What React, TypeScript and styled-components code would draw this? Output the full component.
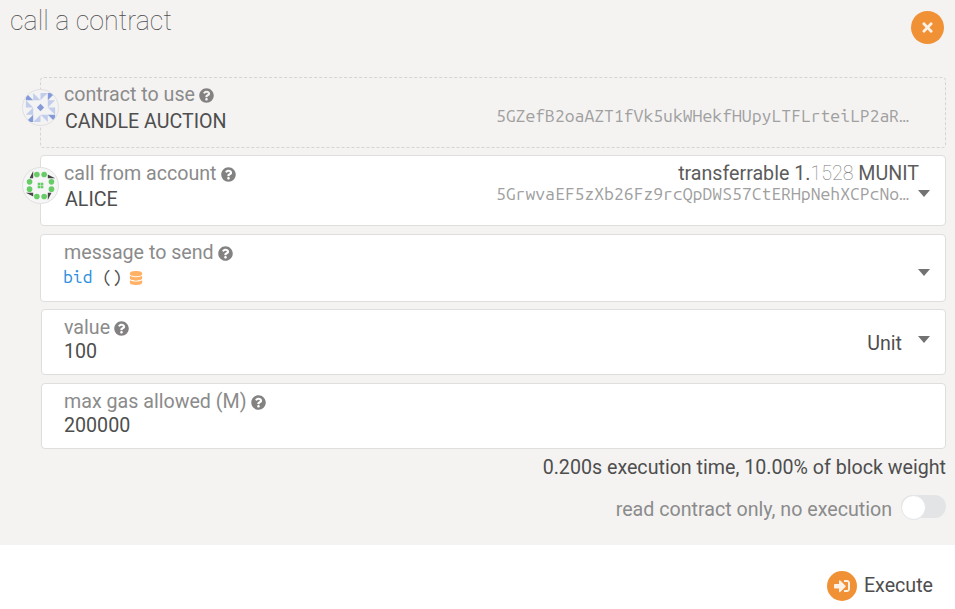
import React from 'react';
import styled, { createGlobalStyle, css } from 'styled-components';
import { FaQuestionCircle, FaTimes, FaDatabase, FaSignInAlt } from 'react-icons/fa';

const GlobalStyle = createGlobalStyle`
  * { box-sizing: border-box; }
  body {
    margin: 0;
    background: #fff;
    font-family: Roboto, sans-serif;
    font-size: 19.65px;
    color: #4e4e4e;
  }
`;

const Modal = styled.div`
  display: flex;
  flex-direction: column;
  width: 955px;
  height: 609px;
  overflow: hidden;
`;

const Content = styled.main`
  height: 545px;
  background: #f4f3f2;
`;

const Header = styled.header`
  display: flex;
  justify-content: space-between;
  align-items: flex-start;
  height: 77px;
  padding: 0 11px 0 10px;
`;

const Title = styled.h1`
  margin: 5px 0 0;
  font-size: 26.8px;
  font-weight: 100;
  line-height: 33px;
  color: #4e4e4e;
`;

const RoundIcon = styled.span<{ $size: number }>`
  display: flex;
  flex: none;
  align-items: center;
  justify-content: center;
  width: ${(p) => p.$size}px;
  height: ${(p) => p.$size}px;
  border-radius: 50%;
  background: #f19135;
  color: rgba(255, 255, 255, 0.87);
`;

const CloseButton = styled.button`
  margin: 11px 0 0;
  padding: 0;
  border: 0;
  background: none;
`;

const Fields = styled.div`
  display: flex;
  flex-direction: column;
  padding: 0 9px 0 40px;
`;

const Field = styled.section<{ $height: number; $gap: number; $dashed?: boolean; $inset?: boolean }>`
  position: relative;
  display: flex;
  justify-content: space-between;
  height: ${(p) => p.$height}px;
  margin-bottom: ${(p) => p.$gap}px;
  border: 1px solid #dededd;
  border-radius: 4px;
  background: #fff;
  padding-left: 23px;
  ${(p) => p.$dashed && css`
    border: 1px dashed #d5d4d3;
    background: transparent;
  `}
  ${(p) => p.$inset && css`
    margin-left: 1px;
    padding-left: 22px;
  `}
`;

const Identicon = styled.svg`
  position: absolute;
  left: -19px;
  top: 11px;
  width: 37px;
  height: 37px;
`;

const Main = styled.div<{ $top: number }>`
  display: flex;
  flex-direction: column;
  padding-top: ${(p) => p.$top}px;
`;

const Label = styled.label`
  display: flex;
  align-items: center;
  height: 24px;
  line-height: 24px;
  white-space: nowrap;
  color: #8b8b8b;

  svg {
    margin: 1px 0 0 4px;
    font-size: 15px;
    color: #838281;
  }
`;

const Value = styled.div<{ $offset?: number }>`
  height: 24px;
  margin-top: ${(p) => p.$offset ?? 0}px;
  line-height: 24px;
  white-space: nowrap;
`;

const AccountName = styled(Value)`
  padding-left: 1px;
  text-transform: uppercase;
`;

const Message = styled(Value)`
  display: flex;
  align-items: center;
  margin-left: -1px;
  font-family: 'Ubuntu Mono', 'DejaVu Sans Mono', monospace;
  font-size: 17.57px;
  white-space: pre;

  b {
    font-weight: 400;
    color: #2d8fdd;
  }

  svg {
    margin: 2px 0 0 7px;
    font-size: 14px;
    color: #ffb266;
  }
`;

const Side = styled.div<{ $top: number }>`
  display: flex;
  align-items: flex-start;
  padding: ${(p) => p.$top}px 15px 0 0;
`;

const Details = styled.div<{ $indent?: number }>`
  display: flex;
  flex-direction: column;
  align-items: flex-end;
  margin-right: ${(p) => p.$indent ?? 0}px;
`;

const Balance = styled.div`
  margin-right: -10px;
  height: 22px;
  line-height: 24px;
  color: #5c5c5c;

  span {
    font-weight: 100;
    color: #777;
  }
`;

const Address = styled.div`
  height: 20px;
  line-height: 20px;
  font-family: 'Ubuntu Mono', 'DejaVu Sans Mono', monospace;
  font-size: 17.57px;
  white-space: nowrap;
  color: #a0a0a0;
`;

const Caret = styled.span<{ $top: number; $gap?: number }>`
  width: 0;
  height: 0;
  margin: ${(p) => p.$top}px 0 0 ${(p) => p.$gap ?? 0}px;
  border: 6px solid transparent;
  border-top: 7px solid #727272;
  border-bottom: 0;
`;

const Estimate = styled.div`
  height: 36px;
  padding-top: 7px;
  line-height: 24px;
  text-align: right;
`;

const ToggleRow = styled.div`
  display: flex;
  justify-content: flex-end;
  height: 30px;
  line-height: 24px;
  padding-top: 13px;
  color: #8b8b8b;
`;

const Toggle = styled.span`
  width: 45.5px;
  height: 23px;
  margin: -3px 0 0 8.5px;
  border-radius: 12px;
  background: #e2e4e6;

  &::before {
    content: '';
    display: block;
    width: 23px;
    height: 23px;
    border: 1px solid #e2e4e6;
    border-radius: 50%;
    background: #fff;
  }
`;

const Footer = styled.footer`
  display: flex;
  justify-content: flex-end;
  align-items: flex-start;
  padding: 26px 22px 0 0;
`;

const ExecuteButton = styled.button`
  display: flex;
  align-items: flex-start;
  gap: 7px;
  padding: 0;
  border: 0;
  background: none;
  font: inherit;
  line-height: 30px;
  color: #4e4e4e;
`;

const Help = () => <FaQuestionCircle />;

const QUARTERS = [0, 90, 180, 270];

const ContractIdenticon = () => (
  <Identicon viewBox="-18.5 -18.5 37 37">
    <defs>
      <clipPath id="badge"><circle r="17.7" /></clipPath>
    </defs>
    <circle r="18" fill="#f3f3f3" stroke="#e0e0e0" />
    <g clipPath="url(#badge)">
      {QUARTERS.map((angle) => (
        <g key={angle} transform={`rotate(${angle})`}>
          <path d="M-14.6-14.6V-7.3H-7.3z" fill="#859bd9" />
          <path d="M-7.3-14.6V-7.3H0z" fill="#c2cdec" />
          <path d="M0-14.6H7.3L0-7.3z" fill="#c2cdec" />
        </g>
      ))}
    </g>
    <path d="M0-3.65L3.65 0 0 3.65-3.65 0z" fill="#859bd9" />
  </Identicon>
);

const AccountIdenticon = () => (
  <Identicon viewBox="-18.5 -18.5 37 37">
    <circle r="18" fill="#f6f6f6" stroke="#e0e0e0" />
    {QUARTERS.map((angle) => (
      <g key={angle} transform={`rotate(${angle})`}>
        <path d="M-7.3-14.6V-7.3H-11z" fill="#464646" />
        <circle cx="-3.65" cy="-10.95" r="2.8" fill="#66cc66" />
        <circle cx="3.65" cy="-10.95" r="2.8" fill="#66cc66" />
        <rect x="0.2" y="0.2" width="2.6" height="2.6" fill="#66cc66" />
      </g>
    ))}
  </Identicon>
);

export default function App() {
  return (
    <Modal>
      <GlobalStyle />
      <Content>
        <Header>
          <Title>call a contract</Title>
          <CloseButton aria-label="close">
            <RoundIcon $size={33}><FaTimes size={15} /></RoundIcon>
          </CloseButton>
        </Header>
        <Fields>
          <Field $height={71} $gap={7} $dashed>
            <ContractIdenticon />
            <Main $top={5}>
              <Label>contract to use<Help /></Label>
              <AccountName $offset={3}>candle auction</AccountName>
            </Main>
            <Side $top={28}>
              <Details $indent={21}>
                <Address>5GZefB2oaAZT1fVk5ukWHekfHUpyLTFLrteiLP2aR…</Address>
              </Details>
            </Side>
          </Field>
          <Field $height={71} $gap={8}>
            <AccountIdenticon />
            <Main $top={6}>
              <Label>call from account<Help /></Label>
              <AccountName $offset={2}>alice</AccountName>
            </Main>
            <Side $top={6}>
              <Details>
                <Balance>transferrable 1.<span>1528</span> MUNIT</Balance>
                <Address>5GrwvaEF5zXb26Fz9rcQpDWS57CtERHpNehXCPcNo…</Address>
              </Details>
              <Caret $top={28} $gap={9} />
            </Side>
          </Field>
          <Field $height={68} $gap={7}>
            <Main $top={6}>
              <Label>message to send<Help /></Label>
              <Message><b>bid</b> ()<FaDatabase /></Message>
            </Main>
            <Side $top={0}><Caret $top={34} /></Side>
          </Field>
          <Field $height={66} $gap={8} $inset>
            <Main $top={6}>
              <Label>value<Help /></Label>
              <Value>100</Value>
            </Main>
            <Side $top={22}>
              <Value>Unit</Value>
              <Caret $top={4} $gap={16} />
            </Side>
          </Field>
          <Field $height={66} $gap={0} $inset>
            <Main $top={6}>
              <Label>max gas allowed (M)<Help /></Label>
              <Value>200000</Value>
            </Main>
          </Field>
          <Estimate>0.200s execution time, 10.00% of block weight</Estimate>
          <ToggleRow>read contract only, no execution<Toggle /></ToggleRow>
        </Fields>
      </Content>
      <Footer>
        <ExecuteButton>
          <RoundIcon $size={30}><FaSignInAlt size={16} /></RoundIcon>
          Execute
        </ExecuteButton>
      </Footer>
    </Modal>
  );
}
